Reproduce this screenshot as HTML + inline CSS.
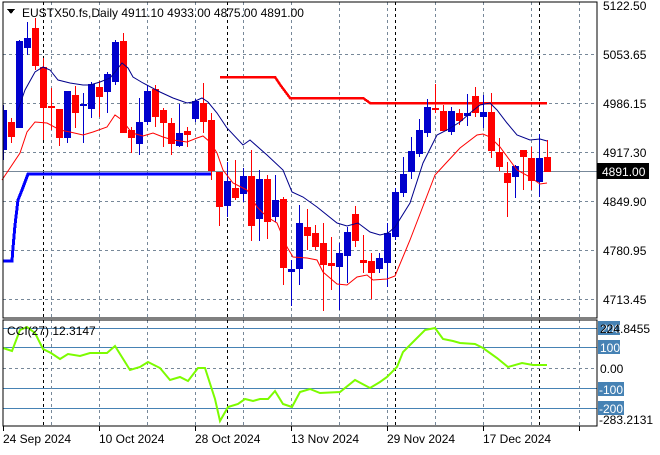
<!DOCTYPE html>
<html><head><meta charset="utf-8"><style>
body{margin:0;background:#fff;width:660px;height:450px;overflow:hidden;font-family:"Liberation Sans",sans-serif}
svg text{font-family:"Liberation Sans",sans-serif;font-size:12px}
</style></head><body>
<svg id="s" width="660" height="450" xmlns="http://www.w3.org/2000/svg" shape-rendering="crispEdges">
<g id="grid" stroke="#778899" stroke-dasharray="3,3" stroke-width="1"></g>
<g id="sep" stroke="#000" stroke-dasharray="3,3" stroke-width="1"></g>
<line x1="3" y1="171.5" x2="597" y2="171.5" stroke="#778899"/>
<polyline fill="none" stroke="#0000ff" stroke-width="3" points="3,261 12,261 13,248 15,225 18,200 22,190 28,174 211,174"/>
<polyline fill="none" stroke="#ff0000" stroke-width="2.5" points="220,77 275,77 281,86 290,98 363,98 370,103 547,103"/>
<g id="candles"></g>
<polyline shape-rendering="auto" fill="none" stroke="#00008b" stroke-width="1" points="18,110 25,90 35,72 43,67 50,70 58,80 70,83 83,85 90,85 100,82 110,78 115,72 122,63 128,68 133,77 143,83 160,92 173,98 187,103 193,102 202,98 208,102 217,113 227,128 243,145 250,140 267,155 283,170 292,192 303,197 317,207 337,223 347,226 358,223 370,232 380,235 388,233 395,227 410,203 423,163 437,135 447,130 460,122 470,113 480,105 490,103 497,110 507,123 517,135 530,140 540,139 547,141"/>
<polyline shape-rendering="auto" fill="none" stroke="#ff0000" stroke-width="1" points="2,180 20,153 27,132 35,122 47,123 60,130 70,132 83,135 93,132 107,127 115,115 122,120 132,133 143,136 153,133 163,137 173,140 187,142 197,138 203,136 210,142 217,153 223,170 233,183 247,190 257,207 267,217 277,223 287,247 293,257 307,258 317,260 323,272 337,284 347,285 357,277 367,275 373,280 387,279 395,276 410,240 435,175 447,162 460,148 477,135 483,134 490,137 500,147 517,170 530,177 540,184 547,183"/>
<rect x="3" y="2" width="594" height="316" fill="none" stroke="#000"/>
<!-- indicator -->
<g stroke="#4682b4">
<line x1="3" y1="328.5" x2="597" y2="328.5"/>
<line x1="3" y1="347.5" x2="597" y2="347.5"/>
<line x1="3" y1="388.5" x2="597" y2="388.5"/>
<line x1="3" y1="408.5" x2="597" y2="408.5"/>
</g>
<line x1="3" y1="368.5" x2="597" y2="368.5" stroke="#778899" stroke-dasharray="3,3"/>
<g id="grid2" stroke="#778899" stroke-dasharray="3,3"></g>
<polyline shape-rendering="auto" fill="none" stroke="#7cfc00" stroke-width="2" points="3,348 12,351 20,330 27,327 35,333 43,349 51,353 60,359 68,354 80,356 90,353 107,353 115,346 130,370 140,367 148,362 160,368 170,380 180,377 188,381 198,368 205,368 215,399 220,421 228,407 238,404 245,399 253,401 260,399 268,399 275,391 283,404 292,407 300,392 310,389 320,393 340,392 355,380 370,388 380,382 387,377 397,367 403,352 413,342 425,330 435,328 443,339 453,341 460,343 475,344 483,348 497,358 508,367 522,363 533,365 547,365"/>
<rect x="3" y="320" width="594" height="106" fill="none" stroke="#000"/>
<text x="7" y="335" fill="#000">CCI(27) 12.3147</text>
<!-- title -->
<polygon points="7,9 15,9 11,14" fill="#000"/>
<text x="22" y="17" fill="#000">EUSTX50.fs,Daily  4911.10 4933.00 4875.00 4891.00</text>
<!-- right axis -->
<g fill="#000">
<text x="603" y="10">5122.50</text>
<text x="603" y="59">5053.65</text>
<text x="603" y="108">4986.15</text>
<text x="603" y="157">4917.30</text>
<text x="603" y="206">4849.90</text>
<text x="603" y="255">4780.95</text>
<text x="603" y="304">4713.45</text>
</g>
<rect x="597" y="163" width="52" height="16" fill="#000"/>
<text x="602" y="176" fill="#fff">4891.00</text>
<rect x="598" y="321" width="22" height="14" fill="#4682b4"/>
<text x="601" y="333" fill="#fff">200</text>
<text x="600" y="333" fill="#000">224.8455</text>
<rect x="598" y="340" width="22" height="14" fill="#4682b4"/>
<text x="600" y="352" fill="#fff">100</text>
<text x="600" y="373" fill="#000">0.00</text>
<rect x="598" y="382" width="26" height="14" fill="#4682b4"/>
<text x="599" y="394" fill="#fff">-100</text>
<rect x="598" y="401" width="26" height="14" fill="#4682b4"/>
<text x="599" y="413" fill="#fff">-200</text>
<text x="599" y="424" fill="#000">-283.2131</text>
<g id="ticks" stroke="#000"></g>
<g fill="#000">
<text x="3" y="443">24 Sep 2024</text>
<text x="99" y="443">10 Oct 2024</text>
<text x="195" y="443">28 Oct 2024</text>
<text x="291" y="443">13 Nov 2024</text>
<text x="387" y="443">29 Nov 2024</text>
<text x="483" y="443">17 Dec 2024</text>
</g>
</svg>
<script>
var NS="http://www.w3.org/2000/svg";
function el(p,t,a){var e=document.createElementNS(NS,t);for(var k in a)e.setAttribute(k,a[k]);p.appendChild(e);return e;}
var g=document.getElementById('grid'),g2=document.getElementById('grid2'),sp=document.getElementById('sep'),tk=document.getElementById('ticks');
[54,103,152,201,250,299].forEach(function(y){el(g,'line',{x1:3,y1:y+.5,x2:597,y2:y+.5});});
for(var x=51;x<597;x+=48){el(g,'line',{x1:x+.5,y1:2,x2:x+.5,y2:318});el(g2,'line',{x1:x+.5,y1:320,x2:x+.5,y2:426});}
[43,227,395,539].forEach(function(x){el(sp,'line',{x1:x+.5,y1:2,x2:x+.5,y2:318});el(sp,'line',{x1:x+.5,y1:320,x2:x+.5,y2:426});});
[3,99,195,291,387,483,579].forEach(function(x){el(tk,'line',{x1:x+.5,y1:426,x2:x+.5,y2:431});});
// [type(1 blue,0 red), open, close, high, low]
var C=[[1,150,110,105,160],[0,122,137,118,143],[1,128,41,40,128],[1,48,38,22,55],[0,28,66,18,70],[0,67,108,58,140],[0,106,108,88,130],[0,109,138,109,146],[1,138,91,91,143],[0,95,113,86,128],[1,106,104,93,143],[1,109,84,82,118],[0,87,97,81,117],[1,92,74,72,113],[1,82,42,40,85],[0,41,133,33,133],[0,130,138,127,153],[1,144,122,98,155],[1,122,91,85,125],[0,89,117,85,127],[0,110,123,108,147],[0,123,144,118,155],[1,146,133,104,147],[0,131,135,127,147],[1,119,101,99,122],[0,103,122,83,133],[0,120,171,113,180],[0,172,207,172,226],[1,206,181,162,217],[0,188,198,160,200],[1,194,176,168,202],[0,176,226,150,241],[1,219,179,170,241],[0,179,222,175,239],[1,217,200,175,222],[0,199,268,197,285],[1,272,269,260,306],[1,269,223,205,285],[0,227,236,209,250],[0,233,247,225,250],[0,243,265,223,311],[0,263,266,237,290],[1,267,253,243,310],[1,256,232,227,283],[0,214,241,206,247],[0,260,263,235,273],[0,261,273,253,299],[1,269,258,253,273],[1,263,233,223,287],[1,237,192,188,240],[1,193,174,157,197],[1,172,151,137,179],[1,154,130,119,157],[1,133,107,99,137],[0,108,110,84,113],[0,111,131,105,131],[1,132,111,107,135],[0,113,121,109,125],[1,116,113,94,126],[0,96,113,87,117],[1,117,112,95,128],[0,112,151,93,158],[0,152,167,138,171],[0,173,183,162,217],[1,177,166,165,198],[0,150,157,150,190],[0,158,181,147,190],[1,182,158,134,197],[0,157,172,140,172]];
var cg=document.getElementById('candles');
C.forEach(function(c,k){var x=3+8*k;var col=c[0]?'#0000cd':'#ff0000';
el(cg,'rect',{x:x,y:c[3],width:1,height:Math.max(1,c[4]-c[3]),fill:col});
var t=Math.min(c[1],c[2]),b=Math.max(c[1],c[2]);var x0=Math.max(x-3,3);
el(cg,'rect',{x:x0,y:t,width:x+4-x0,height:Math.max(2,b-t),fill:col});});
</script>
</body></html>
